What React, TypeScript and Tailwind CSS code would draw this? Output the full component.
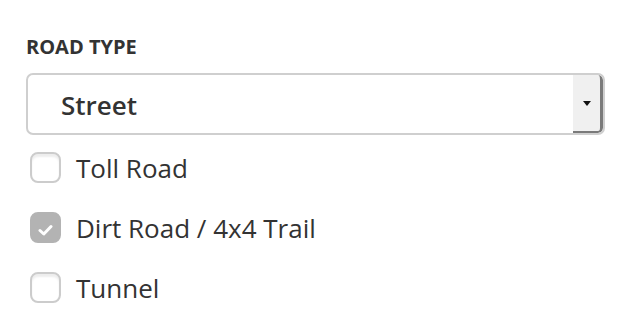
const options = [
  { label: "Toll Road", checked: false },
  { label: "Dirt Road / 4x4 Trail", checked: true },
  { label: "Tunnel", checked: false },
];

const Checkbox = ({ checked }: { checked: boolean }) => (
  <div
    className={
      checked
        ? "w-[31px] h-[31px] shrink-0 rounded-[8px] border-2 border-[#b3b3b3] bg-[#b3b3b3] flex items-center justify-center"
        : "w-[31px] h-[31px] shrink-0 rounded-[8px] border-2 border-[#cccccc] bg-white shadow-[inset_0_3px_2px_rgba(0,0,0,0.07)]"
    }
  >
    {checked && (
      <svg width="15" height="12" viewBox="0 0 15 12" className="mt-[5px]">
        <path d="M2 6.5 L5.8 10 L13 2.5" fill="none" stroke="white" strokeWidth="3" strokeLinecap="round" strokeLinejoin="round" />
      </svg>
    )}
  </div>
);

const App = () => {
  return (
    <div className="w-[624px] h-[334px] bg-white pl-[26px] pr-[19px] pt-[35px] font-['Open_Sans',sans-serif] text-[#333333]">
      <div className="text-[20px] leading-[24px] font-bold">ROAD TYPE</div>

      {/* select */}
      <div className="mt-[14px] flex h-[62px] rounded-[7px] border-2 border-[#cfcfcf] overflow-hidden bg-white">
        <div className="flex flex-1 items-center pl-[33px] pt-[2px] text-[26px] font-semibold">Street</div>
        <div className="w-[30px] flex items-center justify-center bg-[#f0f0f0] border-r-[3px] border-b-[2px] border-[#7a7a7a] rounded-r-[5px]">
          <svg width="8" height="5" viewBox="0 0 8 5">
            <path d="M0 0 H8 L4 5 Z" fill="#111" />
          </svg>
        </div>
      </div>

      <div className="mt-[17px] ml-[4px] flex flex-col gap-[29px]">
        {options.map((opt, index) => (
          <div key={index} className="flex items-center gap-[15px] h-[31px]">
            <Checkbox checked={opt.checked} />
            <span className="text-[26px] leading-[31px] pt-[2px]">{opt.label}</span>
          </div>
        ))}
      </div>
    </div>
  );
};

export default App;
